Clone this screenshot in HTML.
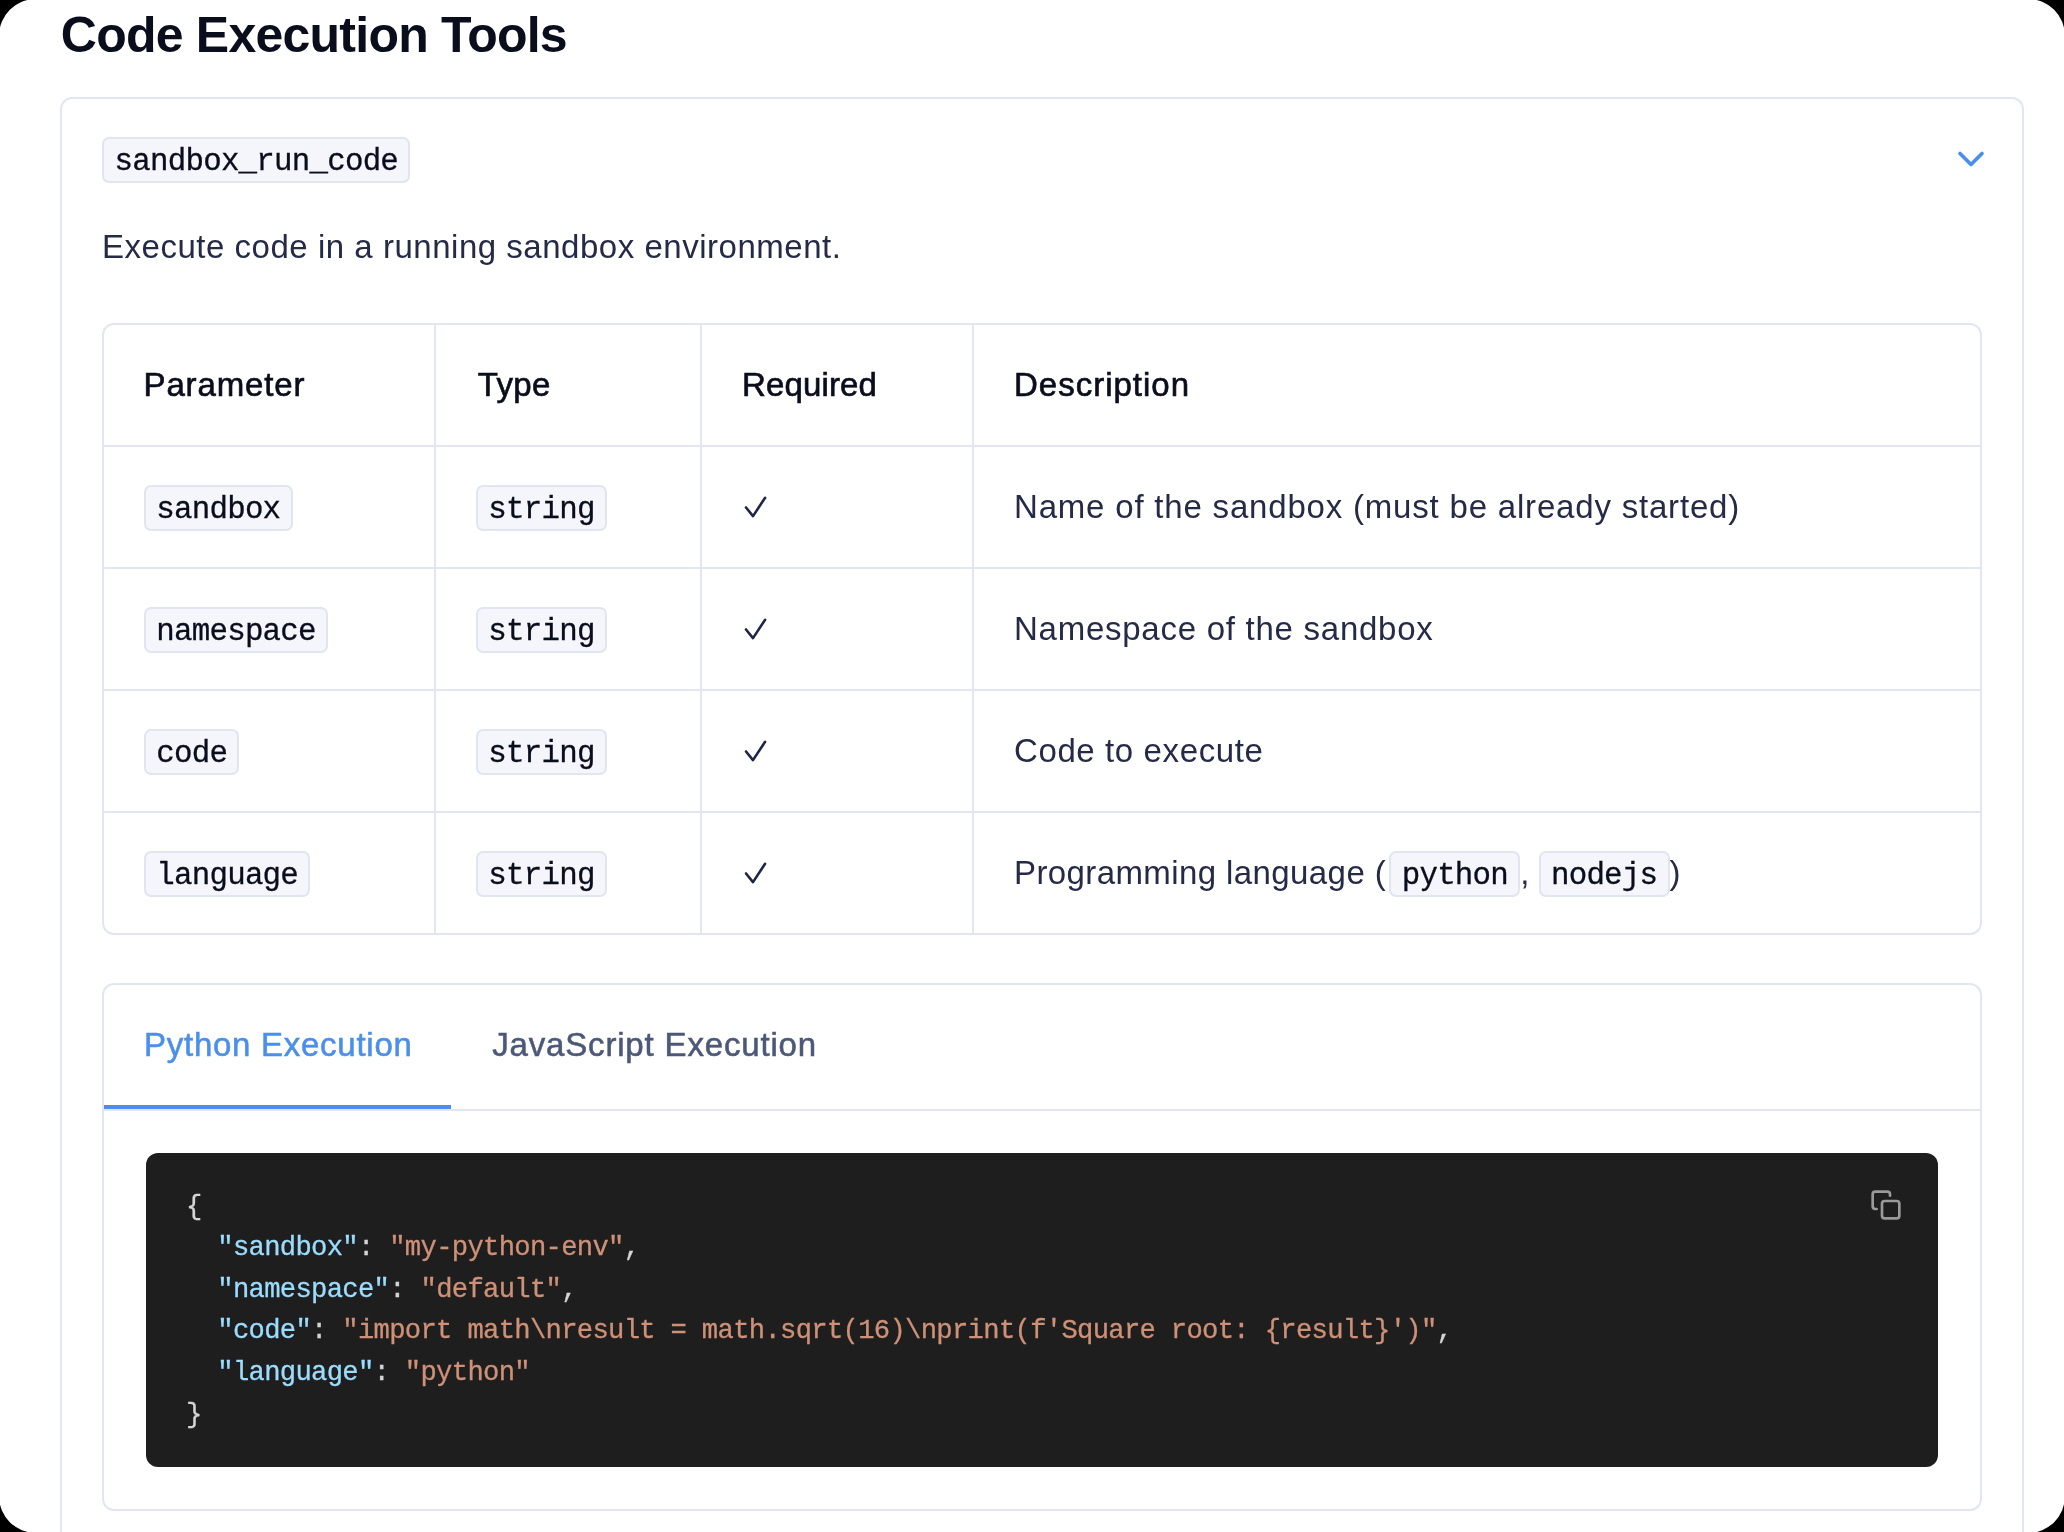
<!DOCTYPE html>
<html lang="en">
<head>
<meta charset="utf-8">
<title>Code Execution Tools</title>
<style>
*{box-sizing:border-box;margin:0;padding:0}
html,body{width:2064px;height:1532px;overflow:hidden;background:#000}
body{font-family:"Liberation Sans",sans-serif;color:#252b46;-webkit-font-smoothing:antialiased}
.bg{position:absolute;left:-1px;top:-1px;width:2066px;height:1534px;background:#fff;border-radius:37px}
.page{position:absolute;left:0;top:0;width:2064px;height:1532px;overflow:hidden;will-change:transform}
h1{position:absolute;left:60.8px;top:5px;font-size:50px;line-height:60px;font-weight:700;color:#0a0e1c;white-space:nowrap}
.card{position:absolute;left:60px;top:97px;width:1964px;height:1600px;border:2px solid #e2e6f1;border-radius:12px;background:#fff}
code.b{-webkit-text-stroke:.3px;font-family:"Liberation Mono",monospace;font-size:30.8px;letter-spacing:-.763px;display:inline-block;height:46px;line-height:46.6px;padding:0 10.3px;border:2px solid #e1e5f0;border-radius:7px;background:#f5f6fb;overflow:visible;color:#0a0e1c;white-space:nowrap;vertical-align:middle}
.tool{position:absolute;left:102.3px;top:137px}
.chev{position:absolute;left:1949px;top:136.9px;width:44px;height:44px}
.desc{position:absolute;left:102px;top:227px;font-size:33px;line-height:40px;white-space:nowrap;color:#252b46}
.tbl{position:absolute;left:102px;top:323px;width:1880px;height:612px;border:2px solid #e2e6f1;border-radius:12px;overflow:hidden}
.row{position:relative;height:122px;border-bottom:2px solid #e2e6f1}
.row:last-child{border-bottom:0;height:120px}
.c{position:absolute;top:0;height:120px;display:flex;align-items:center;padding-left:40px;font-size:33px;white-space:nowrap;color:#252b46}
.c code.b{margin-top:2px}
.c1{left:0;width:330px}
.c2{left:330px;width:266px;border-left:2px solid #e2e6f1}
.c3{left:596px;width:272px;border-left:2px solid #e2e6f1}
.c4{left:868px;width:1008px;border-left:2px solid #e2e6f1}
.hd .c{font-weight:400;color:#0a0e1c;-webkit-text-stroke:.65px #0a0e1c}
.tabs{position:absolute;left:102px;top:983px;width:1880px;height:528px;border:2px solid #e2e6f1;border-radius:12px;overflow:hidden}
.tabbar{position:absolute;left:0;top:0;width:1876px;height:126px;border-bottom:2px solid #e2e6f1}
.tab{position:absolute;top:0;height:124px;line-height:120px;font-size:33px;white-space:nowrap;color:#4c5878;-webkit-text-stroke:.55px}
.tab.on{left:0;width:347px;padding-left:40px;color:#4b8fea;border-bottom:4px solid #4b8fea}
.tab.off{left:388px}
pre{-webkit-text-stroke:.3px;position:absolute;left:42px;top:168px;width:1792px;height:314px;background:#1e1e1e;border-radius:12px;padding:32.6px 40px 31.4px;font-family:"Liberation Mono",monospace;font-size:27.2px;letter-spacing:-.683px;line-height:41.6px;color:#d4d4d4;white-space:pre;overflow:hidden}
.k{color:#9cdcfe}.s{color:#ce9178}
.copy{position:absolute;left:1765.5px;top:203.5px;width:32px;height:32px}
.ck{width:28px;height:24px;display:block}
/*FIT*/
#t_h1{letter-spacing:-0.763px;position:relative;left:-0.00px}
#t_desc{letter-spacing:0.522px;position:relative;left:-0.00px}
#t_par{letter-spacing:0.875px;position:relative;left:-0.50px}
#t_typ{letter-spacing:0.350px;position:relative;left:1.80px}
#t_req{letter-spacing:0.143px;position:relative;left:0.00px}
#t_des{letter-spacing:1.000px;position:relative;left:0.00px}
#t_r1{letter-spacing:0.807px;position:relative;left:-0.00px}
#t_r2{letter-spacing:0.739px;position:relative;left:0.00px}
#t_r3{letter-spacing:0.607px;position:relative;left:0.00px}
#t_r4{letter-spacing:0.405px;position:relative;left:-0.00px}
#t_t1{letter-spacing:0.733px;position:relative;left:-0.00px}
#t_t2{letter-spacing:0.830px;position:relative;left:0.20px}
/*ENDFIT*/
</style>
</head>
<body>
<div class="bg"></div>
<div class="page">
<h1><span id="t_h1">Code Execution Tools</span></h1>
<div class="card"></div>
<div class="tool"><code class="b">sandbox_run_code</code></div>
<svg class="chev" viewBox="0 0 24 24" fill="none" stroke="#4b8fea" stroke-width="2" stroke-linecap="round" stroke-linejoin="round"><path d="M6 9l6 6 6-6"/></svg>
<div class="desc"><span id="t_desc">Execute code in a running sandbox environment.</span></div>

<div class="tbl">
 <div class="row hd"><div class="c c1"><span id="t_par">Parameter</span></div><div class="c c2"><span id="t_typ">Type</span></div><div class="c c3"><span id="t_req">Required</span></div><div class="c c4"><span id="t_des">Description</span></div></div>
 <div class="row"><div class="c c1"><code class="b">sandbox</code></div><div class="c c2"><code class="b">string</code></div><div class="c c3"><svg class="ck" viewBox="0 0 28 24" fill="none" stroke="#1f2544" stroke-width="2.6" stroke-linecap="round" stroke-linejoin="round"><path d="M4 12.5L11 21.1L23.1 2.8"/></svg></div><div class="c c4"><span id="t_r1">Name of the sandbox (must be already started)</span></div></div>
 <div class="row"><div class="c c1"><code class="b">namespace</code></div><div class="c c2"><code class="b">string</code></div><div class="c c3"><svg class="ck" viewBox="0 0 28 24" fill="none" stroke="#1f2544" stroke-width="2.6" stroke-linecap="round" stroke-linejoin="round"><path d="M4 12.5L11 21.1L23.1 2.8"/></svg></div><div class="c c4"><span id="t_r2">Namespace of the sandbox</span></div></div>
 <div class="row"><div class="c c1"><code class="b">code</code></div><div class="c c2"><code class="b">string</code></div><div class="c c3"><svg class="ck" viewBox="0 0 28 24" fill="none" stroke="#1f2544" stroke-width="2.6" stroke-linecap="round" stroke-linejoin="round"><path d="M4 12.5L11 21.1L23.1 2.8"/></svg></div><div class="c c4"><span id="t_r3">Code to execute</span></div></div>
 <div class="row"><div class="c c1"><code class="b">language</code></div><div class="c c2"><code class="b">string</code></div><div class="c c3"><svg class="ck" viewBox="0 0 28 24" fill="none" stroke="#1f2544" stroke-width="2.6" stroke-linecap="round" stroke-linejoin="round"><path d="M4 12.5L11 21.1L23.1 2.8"/></svg></div><div class="c c4"><span id="t_r4">Programming language (</span><code class="b" style="margin-left:3.3px">python</code><span>,&nbsp;</span><code class="b">nodejs</code><span>)</span></div></div>
</div>

<div class="tabs">
 <div class="tabbar"><div class="tab on"><span id="t_t1">Python Execution</span></div><div class="tab off"><span id="t_t2">JavaScript Execution</span></div></div>
 <pre>{
  <span class="k">"sandbox"</span>: <span class="s">"my-python-env"</span>,
  <span class="k">"namespace"</span>: <span class="s">"default"</span>,
  <span class="k">"code"</span>: <span class="s">"import math\nresult = math.sqrt(16)\nprint(f'Square root: {result}')"</span>,
  <span class="k">"language"</span>: <span class="s">"python"</span>
}</pre>
 <svg class="copy" viewBox="0 0 24 24" fill="none" stroke="#9a9a9a" stroke-width="2" stroke-linecap="round" stroke-linejoin="round"><rect x="9" y="9" width="13" height="13" rx="2" ry="2"/><path d="M5 15H4a2 2 0 0 1-2-2V4a2 2 0 0 1 2-2h9a2 2 0 0 1 2 2v1"/></svg>
</div>
</div>
</body>
</html>
